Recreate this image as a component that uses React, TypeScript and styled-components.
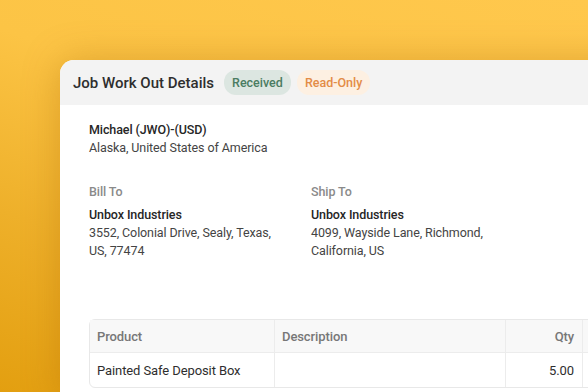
import React from "react";
import styled, { createGlobalStyle } from "styled-components";

const GlobalStyle = createGlobalStyle`
  html, body {
    margin: 0;
    padding: 0;
    width: 588px;
    height: 392px;
    overflow: hidden;
  }
  body {
    font-family: Roboto, "Noto Sans", sans-serif;
    -webkit-font-smoothing: antialiased;
  }
`;

const lines = [
  {
    product: "Painted Safe Deposit Box",
    description: "",
    qty: "5.00",
  },
];

function App() {
  return (
    <>
      <GlobalStyle />
      <Backdrop>
        <Card>
          <Header>
            <Title>Job Work Out Details</Title>
            <Badge $tone="green">Received</Badge>
            <Badge $tone="orange">Read-Only</Badge>
          </Header>
          <Body>
            <Party>
              <Strong>Michael (JWO)-(USD)</Strong>
              <Text>Alaska, United States of America</Text>
            </Party>
            <Addresses>
              <Address>
                <Label>Bill To</Label>
                <Strong>Unbox Industries</Strong>
                <Text>
                  3552, Colonial Drive, Sealy, Texas,
                  <br />
                  US, 77474
                </Text>
              </Address>
              <Address>
                <Label>Ship To</Label>
                <Strong>Unbox Industries</Strong>
                <Text>
                  4099, Wayside Lane, Richmond,
                  <br />
                  California, US
                </Text>
              </Address>
            </Addresses>
            <Table>
              <thead>
                <tr>
                  <Th>Product</Th>
                  <Th>Description</Th>
                  <Th $right>Qty</Th>
                  <Th />
                </tr>
              </thead>
              <tbody>
                {lines.map((l) => (
                  <tr key={l.product}>
                    <Td>{l.product}</Td>
                    <Td>{l.description}</Td>
                    <Td $right>{l.qty}</Td>
                    <Td />
                  </tr>
                ))}
              </tbody>
            </Table>
          </Body>
        </Card>
      </Backdrop>
    </>
  );
}

const Backdrop = styled.div`
  width: 588px;
  height: 392px;
  box-sizing: border-box;
  padding: 60px 0 0 60px;
  background: linear-gradient(
    200deg,
    #ffc84d 0%,
    #fcc445 40%,
    #eeb02a 70%,
    #e39f10 100%
  );
  overflow: hidden;
`;

const Card = styled.div`
  width: 620px;
  height: 340px;
  background: #ffffff;
  border-radius: 14px 0 0 0;
  box-shadow: 0 0 36px rgba(170, 100, 0, 0.35);
  overflow: hidden;
`;

const Header = styled.div`
  display: flex;
  align-items: center;
  gap: 6px;
  height: 45px;
  padding: 0 13px;
  background: #f3f3f3;
`;

const Title = styled.h1`
  margin: 0 4px 0 0;
  font-size: 15px;
  font-weight: 500;
  color: #2e2e2e;
`;

const Badge = styled.span<{ $tone: "green" | "orange" }>`
  display: inline-flex;
  align-items: center;
  height: 25px;
  padding: 0 8px;
  border-radius: 12px;
  font-size: 12.5px;
  font-weight: 500;
  background: ${(p) => (p.$tone === "green" ? "#dce6e1" : "#fdf0e2")};
  color: ${(p) => (p.$tone === "green" ? "#4b7c62" : "#e38c46")};
`;

const Body = styled.div`
  padding: 16px 0 0 29px;
  font-size: 12.5px;
  letter-spacing: -0.1px;
`;

const Party = styled.div`
  display: flex;
  flex-direction: column;
`;

const Strong = styled.div`
  line-height: 18px;
  font-weight: 500;
  color: #262626;
`;

const Text = styled.div`
  line-height: 18px;
  color: #444444;
`;

const Addresses = styled.div`
  display: grid;
  grid-template-columns: 222px 222px;
  margin-top: 26px;
`;

const Address = styled.div`
  display: flex;
  flex-direction: column;
`;

const Label = styled.div`
  line-height: 18px;
  font-weight: 500;
  color: #8a8a8a;
  margin-bottom: 5px;
`;

const Table = styled.table`
  margin-top: 59px;
  border-collapse: separate;
  border-spacing: 0;
  border: 1px solid #e8e8e8;
  border-radius: 6px;
  table-layout: fixed;
  width: 560px;

  th:nth-child(1) {
    width: 185px;
  }
  th:nth-child(2) {
    width: 231px;
  }
  th:nth-child(3) {
    width: 77px;
  }
`;

const Th = styled.th<{ $right?: boolean }>`
  height: 33px;
  padding: 0 8px 0 7px;
  background: #f8f8f8;
  border-bottom: 1px solid #ececec;
  border-right: 1px solid #ececec;
  font-size: 13px;
  font-weight: 500;
  color: #777777;
  text-align: ${(p) => (p.$right ? "right" : "left")};
  box-sizing: border-box;
`;

const Td = styled.td<{ $right?: boolean }>`
  height: 34px;
  padding: 0 8px 0 7px;
  border-right: 1px solid #ececec;
  font-size: 13px;
  color: #2e2e2e;
  text-align: ${(p) => (p.$right ? "right" : "left")};
  box-sizing: border-box;
`;

export default App;
